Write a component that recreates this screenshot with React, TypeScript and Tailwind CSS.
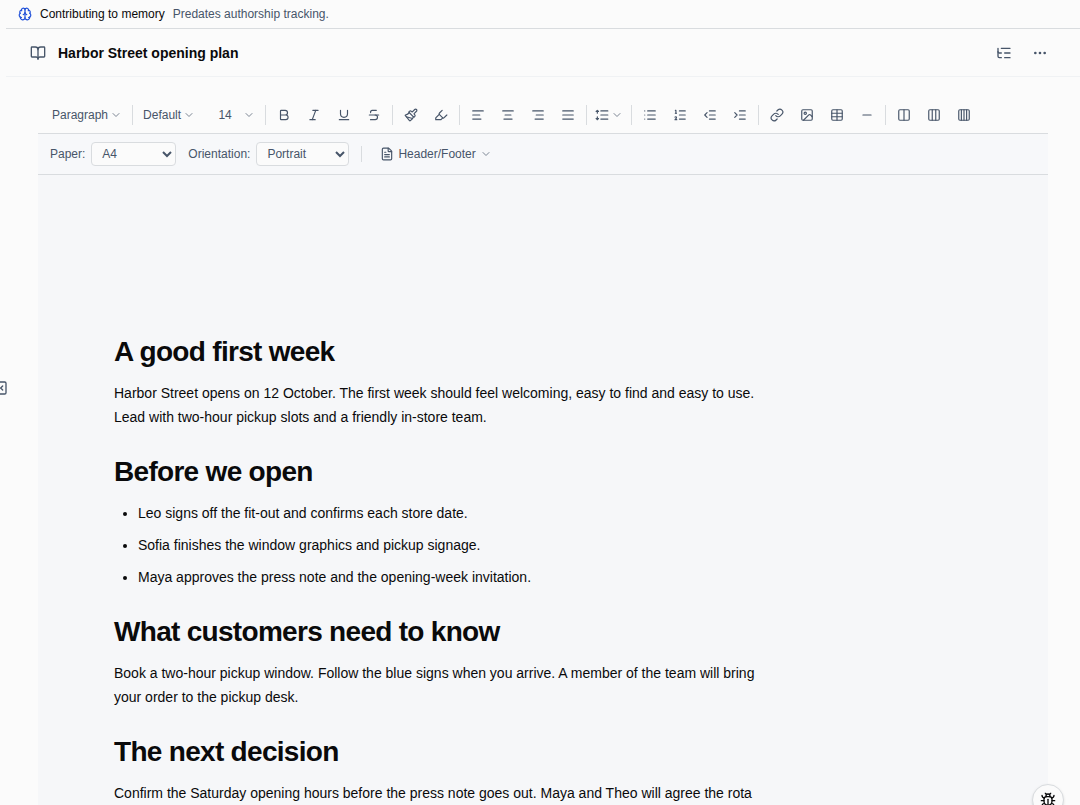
import type { ReactNode } from "react";
import {
  AlignCenter,
  AlignJustify,
  AlignLeft,
  AlignRight,
  Bold,
  BookOpen,
  Brain,
  Bug,
  ChevronDown,
  Columns2,
  Columns3,
  Columns4,
  Ellipsis,
  FileText,
  Highlighter,
  Image,
  Italic,
  Link,
  List,
  ListIndentDecrease,
  ListIndentIncrease,
  ListOrdered,
  ListTree,
  Minus,
  Paintbrush,
  PanelLeftClose,
  Strikethrough,
  Table,
  Underline,
  type LucideIcon,
} from "lucide-react";

type Tool = { label: string; icon: LucideIcon };

const textTools: Tool[] = [
  { label: "Bold", icon: Bold },
  { label: "Italic", icon: Italic },
  { label: "Underline", icon: Underline },
  { label: "Strikethrough", icon: Strikethrough },
];

const colorTools: Tool[] = [
  { label: "Text color", icon: Paintbrush },
  { label: "Highlight", icon: Highlighter },
];

const alignTools: Tool[] = [
  { label: "Align left", icon: AlignLeft },
  { label: "Align center", icon: AlignCenter },
  { label: "Align right", icon: AlignRight },
  { label: "Justify", icon: AlignJustify },
];

const listTools: Tool[] = [
  { label: "Bullet list", icon: List },
  { label: "Numbered list", icon: ListOrdered },
  { label: "Decrease indent", icon: ListIndentDecrease },
  { label: "Increase indent", icon: ListIndentIncrease },
];

const insertTools: Tool[] = [
  { label: "Link", icon: Link },
  { label: "Image", icon: Image },
  { label: "Table", icon: Table },
  { label: "Horizontal rule", icon: Minus },
];

const columnTools: Tool[] = [
  { label: "Two columns", icon: Columns2 },
  { label: "Three columns", icon: Columns3 },
  { label: "Four columns", icon: Columns4 },
];

function Divider() {
  return <div className="mx-0.5 h-5 w-px shrink-0 bg-[#d9dcdf]" />;
}

function Chevron() {
  return <ChevronDown className="size-3 shrink-0 opacity-70" />;
}

function ToolGroup({ tools }: { tools: Tool[] }) {
  return (
    <>
      {tools.map(({ label, icon: Icon }) => (
        <button
          key={label}
          aria-label={label}
          className="flex size-7 shrink-0 items-center justify-center rounded hover:bg-slate-100"
        >
          <Icon className="size-3.5" />
        </button>
      ))}
    </>
  );
}

function LineSpacingIcon() {
  return (
    <svg
      viewBox="0 0 24 24"
      fill="none"
      stroke="currentColor"
      strokeWidth="2"
      strokeLinecap="round"
      strokeLinejoin="round"
      className="size-3.5"
    >
      <path d="M10 5h12M10 12h12M10 19h12" />
      <path d="M4 9V4M2 6l2-2 2 2M4 15v5M2 18l2 2 2-2" />
    </svg>
  );
}

function Toolbar() {
  return (
    <div className="flex items-center gap-0.5 border-b border-[#d9dcdf] px-2 py-1">
      <button className="flex h-7 items-center gap-0.5 rounded px-1.5">
        Paragraph
        <Chevron />
      </button>
      <Divider />
      <button className="flex h-7 items-center gap-0.5 rounded px-1.5">
        Default
        <Chevron />
      </button>
      <div className="flex h-7 items-center pl-1 pr-1.5">
        <input
          aria-label="Font size"
          defaultValue="14"
          className="w-9 bg-transparent text-center outline-none"
        />
        <button aria-label="Font size options">
          <Chevron />
        </button>
      </div>
      <Divider />
      <ToolGroup tools={textTools} />
      <Divider />
      <ToolGroup tools={colorTools} />
      <Divider />
      <ToolGroup tools={alignTools} />
      <Divider />
      <button aria-label="Line spacing" className="flex h-7 items-center gap-0.5 rounded px-1">
        <LineSpacingIcon />
        <Chevron />
      </button>
      <Divider />
      <ToolGroup tools={listTools} />
      <Divider />
      <ToolGroup tools={insertTools} />
      <Divider />
      <ToolGroup tools={columnTools} />
    </div>
  );
}

function PageSetup() {
  return (
    <div className="flex items-center gap-3 border-b border-[#d9dcdf] bg-[#f7f8fa] px-3 py-2">
      <div className="flex items-center gap-1.5">
        <label htmlFor="paper">Paper:</label>
        <select id="paper" className="h-6 w-[85px] rounded border border-[#d9dcdf] bg-[#fbfbfb] px-1.5">
          <option>A4</option>
          <option>Letter</option>
        </select>
      </div>
      <div className="flex items-center gap-1.5">
        <label htmlFor="orientation">Orientation:</label>
        <select id="orientation" className="h-6 w-[93px] rounded border border-[#d9dcdf] bg-[#fbfbfb] px-1.5">
          <option>Portrait</option>
          <option>Landscape</option>
        </select>
      </div>
      <div className="h-4 w-px bg-[#d9dcdf]" />
      <button className="flex h-6 items-center gap-1 rounded px-1.5">
        <FileText className="size-3.5" />
        Header/Footer
        <Chevron />
      </button>
    </div>
  );
}

function Heading({ children }: { children: ReactNode }) {
  return (
    <h2 className="mb-2.5 mt-6 text-[28px] font-bold leading-[38px] tracking-tight first:mt-0">{children}</h2>
  );
}

function Document() {
  return (
    <article className="w-full max-w-[794px] px-19 pb-19 pt-[158px] text-sm leading-6 text-[#0a0a0b]">
      <Heading>A good first week</Heading>
      <p>
        Harbor Street opens on 12 October. The first week should feel welcoming, easy to find and easy to use.
        Lead with two-hour pickup slots and a friendly in-store team.
      </p>
      <Heading>Before we open</Heading>
      <ul className="list-disc space-y-2 pl-6">
        <li>Leo signs off the fit-out and confirms each store date.</li>
        <li>Sofia finishes the window graphics and pickup signage.</li>
        <li>Maya approves the press note and the opening-week invitation.</li>
      </ul>
      <Heading>What customers need to know</Heading>
      <p>
        Book a two-hour pickup window. Follow the blue signs when you arrive. A member of the team will bring
        your order to the pickup desk.
      </p>
      <Heading>The next decision</Heading>
      <p>Confirm the Saturday opening hours before the press note goes out. Maya and Theo will agree the rota</p>
    </article>
  );
}

export default function App() {
  return (
    <div className="relative flex h-screen overflow-hidden bg-[#fbfbfb] font-['Liberation_Sans',Arial,sans-serif] text-xs text-[#475569]">
      <button aria-label="Open sidebar" className="absolute -left-2 top-[380px]">
        <PanelLeftClose className="size-4" />
      </button>
      <main className="ml-1.5 flex min-w-0 flex-1 flex-col">
        <div className="flex h-[29px] shrink-0 items-center gap-2 border-b border-[#d9dcdf] px-3">
          <Brain className="size-3.5 text-[#1d4ed8]" />
          <span className="text-[#0a0a0b]">Contributing to memory</span>
          <span>Predates authorship tracking.</span>
        </div>
        <header className="flex h-12 shrink-0 items-center gap-3 border-b border-[#f0f2f4] px-6">
          <BookOpen className="size-4" />
          <h1 className="flex-1 text-sm font-bold text-[#0a0a0b]">Harbor Street opening plan</h1>
          <div className="flex gap-1">
            <button aria-label="Outline" className="flex size-8 items-center justify-center rounded">
              <ListTree className="size-4" />
            </button>
            <button aria-label="More" className="flex size-8 items-center justify-center rounded">
              <Ellipsis className="size-4" />
            </button>
          </div>
        </header>
        <div className="flex min-h-0 flex-1 flex-col px-8 pt-5">
          <Toolbar />
          <PageSetup />
          <div className="min-h-0 flex-1 overflow-hidden bg-[#f6f7f9]">
            <Document />
          </div>
        </div>
      </main>
      <button
        aria-label="Report a bug"
        className="absolute -bottom-[11px] right-4 flex size-8 items-center justify-center rounded-full border border-[#d9dcdf] bg-[#fbfbfb] text-[#0a0a0b] shadow-sm"
      >
        <Bug className="size-4" />
      </button>
    </div>
  );
}
